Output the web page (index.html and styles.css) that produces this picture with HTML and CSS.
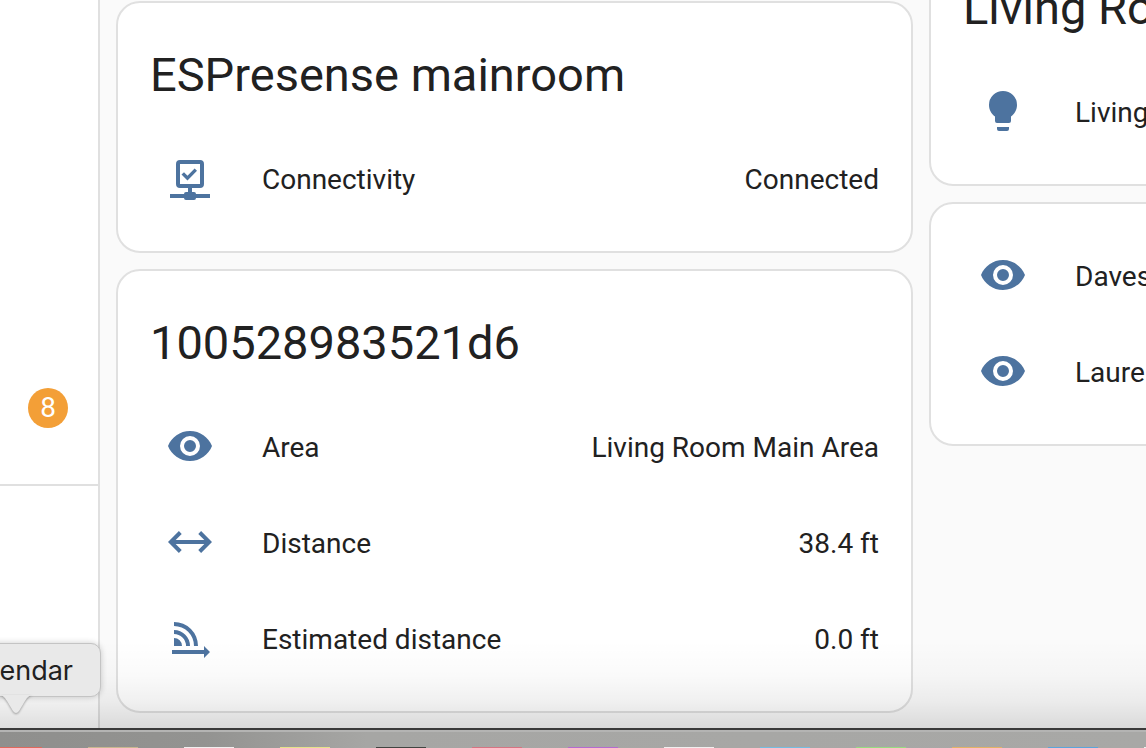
FILE: index.html
```html
<!DOCTYPE html>
<html lang="en">
<head>
    <meta charset="UTF-8">
    <meta name="viewport" content="width=device-width, initial-scale=1.0">
    <title>Overview</title>
    <link rel="stylesheet" href="styles.css">
</head>
<body>
    <!-- Shared icon shapes -->
    <svg class="icon-defs" aria-hidden="true">
        <symbol id="eye" viewBox="0 0 24 24">
            <path d="M12,9A3,3 0 0,0 9,12A3,3 0 0,0 12,15A3,3 0 0,0 15,12A3,3 0 0,0 12,9M12,17A5,5 0 0,1 7,12A5,5 0 0,1 12,7A5,5 0 0,1 17,12A5,5 0 0,1 12,17M12,4.5C7,4.5 2.73,7.61 1,12C2.73,16.39 7,19.5 12,19.5C17,19.5 21.27,16.39 23,12C21.27,7.61 17,4.5 12,4.5Z"/>
        </symbol>
        <symbol id="bulb" viewBox="0 0 24 24">
            <path d="M12,2A7,7 0 0,0 5,9C5,11.38 6.19,13.47 8,14.74V17A1,1 0 0,0 9,18H15A1,1 0 0,0 16,17V14.74C17.81,13.47 19,11.38 19,9A7,7 0 0,0 12,2M9,21A1,1 0 0,0 10,22H14A1,1 0 0,0 15,21V20H9V21Z"/>
        </symbol>
        <symbol id="network" viewBox="0 -1 24 24">
            <path fill-rule="evenodd" d="M7,2H17A2,2 0 0,1 19,4V14A2,2 0 0,1 17,16H7A2,2 0 0,1 5,14V4A2,2 0 0,1 7,2M7,4V14H17V4Z"/>
            <path d="M10.75,12.25L7.75,9.25L9,8.1L10.75,9.85L14.3,6.25L15.5,7.4Z"/>
            <path d="M11,16H13V18H14A1,1 0 0,1 15,19H22V21H15A1,1 0 0,1 14,22H10A1,1 0 0,1 9,21H2V19H9A1,1 0 0,1 10,18H11Z"/>
        </symbol>
        <symbol id="arrows" viewBox="0 0 24 24">
            <path d="M6.45,17.45L1,12L6.45,6.55L7.86,7.96L4.83,11H19.17L16.14,7.96L17.55,6.55L23,12L17.55,17.45L16.14,16.04L19.17,13H4.83L7.86,16.04L6.45,17.45Z"/>
        </symbol>
        <symbol id="signal" viewBox="0 0 24 24">
            <path d="M4,4A12,12 0 0,1 16,16H14A10,10 0 0,0 4,6ZM4,8A8,8 0 0,1 12,16H10A6,6 0 0,0 4,10ZM4,12A4,4 0 0,1 8,16H4ZM3,18H19V16L22,19L19,22V20H3Z"/>
        </symbol>
    </svg>

    <div class="app">
        <aside class="sidebar">
            <div class="sidebar-top">
                <span class="badge">8</span>
            </div>
            <div class="sidebar-bottom"></div>
        </aside>

        <main class="columns">
            <div class="column">
                <section class="card">
                    <h1>ESPresense mainroom</h1>
                    <div class="entities">
                        <div class="row"><svg class="icon"><use href="#network"/></svg><span class="name">Connectivity</span><span class="state">Connected</span></div>
                    </div>
                </section>
                <section class="card">
                    <h1>100528983521d6</h1>
                    <div class="entities">
                        <div class="row"><svg class="icon"><use href="#eye"/></svg><span class="name">Area</span><span class="state">Living Room Main Area</span></div>
                        <div class="row"><svg class="icon"><use href="#arrows"/></svg><span class="name">Distance</span><span class="state">38.4 ft</span></div>
                        <div class="row"><svg class="icon"><use href="#signal"/></svg><span class="name">Estimated distance</span><span class="state">0.0 ft</span></div>
                    </div>
                </section>
            </div>

            <div class="column column-scrolled">
                <section class="card">
                    <h1>Living Room</h1>
                    <div class="entities">
                        <div class="row"><svg class="icon"><use href="#bulb"/></svg><span class="name">Living</span></div>
                    </div>
                </section>
                <section class="card">
                    <div class="entities no-title">
                        <div class="row"><svg class="icon"><use href="#eye"/></svg><span class="name">Daves</span></div>
                        <div class="row"><svg class="icon"><use href="#eye"/></svg><span class="name">Laure</span></div>
                    </div>
                </section>
            </div>
        </main>
        <div class="dock-shadow"></div>
        <div class="tooltip">
            Calendar
            <svg class="tooltip-arrow" viewBox="0 0 34 19"><path d="M0,0C4,0 6,3 8,6L14,16Q17,20 20,16L26,6C28,3 30,0 34,0Z"/></svg>
        </div>
    </div>

    <footer class="dock">
        <span class="dock-app red"></span>
        <span class="dock-app tan"></span>
        <span class="dock-app white"></span>
        <span class="dock-app yellow"></span>
        <span class="dock-app dark"></span>
        <span class="dock-app pink"></span>
        <span class="dock-app purple"></span>
        <span class="dock-app white"></span>
        <span class="dock-app sky"></span>
        <span class="dock-app green"></span>
        <span class="dock-app orange"></span>
        <span class="dock-app blue"></span>
        <span class="dock-app white"></span>
    </footer>
</body>
</html>
```

FILE: styles.css
```css
* {
    box-sizing: border-box;
}

body {
    margin: 0;
    height: 100vh;
    display: flex;
    flex-direction: column;
    overflow: hidden;
    font-family: Roboto, sans-serif;
    font-size: 28px;
    color: #212121;
    background-color: #fafafa;
}

.icon-defs {
    display: none;
}

.app {
    position: relative;
    flex: 1;
    min-height: 0;
    display: flex;
    overflow: hidden;
}

/* Sidebar */
.sidebar {
    flex: 0 0 100px;
    display: flex;
    flex-direction: column;
    background: white;
    border-right: 2px solid #e0e0e0;
}

.sidebar-top {
    flex: 1;
    display: flex;
    flex-direction: column;
    justify-content: flex-end;
    padding: 0 28px 56px;
    border-bottom: 2px solid #e0e0e0;
}

.sidebar-bottom {
    flex: 0 0 242px;
}

.badge {
    width: 40px;
    height: 40px;
    border-radius: 50%;
    line-height: 40px;
    text-align: center;
    color: white;
    background-color: #f39f37;
}

/* Cards */
.columns {
    flex: 1;
    min-width: 0;
    display: flex;
    gap: 16px;
    padding: 0 16px;
}

.column {
    flex: 0 0 78.6%;
    display: flex;
    flex-direction: column;
    gap: 16px;
    margin-top: 1px;
}

.column-scrolled {
    margin-top: -66px;
}

.card {
    background: white;
    border: 2px solid #e0e0e0;
    border-radius: 24px;
}

h1 {
    margin: 0;
    padding: 24px 32px 16px;
    font-size: 47px;
    font-weight: 400;
    line-height: 96px;
    white-space: nowrap;
}

.entities {
    display: flex;
    flex-direction: column;
    gap: 16px;
    padding: 0 32px 32px;
}

.no-title {
    padding-top: 32px;
}

.row {
    display: flex;
    align-items: center;
    height: 80px;
}

.icon {
    width: 48px;
    height: 48px;
    margin: 0 48px 2px 16px;
    fill: #4d739f;
}

.name {
    flex: 1;
    white-space: nowrap;
}

/* Dock */
.dock-shadow {
    position: absolute;
    left: 0;
    right: 0;
    bottom: 0;
    height: 88px;
    background: linear-gradient(transparent, rgba(0, 0, 0, 0.02) 40%, rgba(0, 0, 0, 0.06) 70%, rgba(0, 0, 0, 0.13));
}

.tooltip {
    position: absolute;
    left: -69px;
    bottom: 31px;
    width: 170px;
    height: 54px;
    border: 1px solid #c4c4c4;
    border-radius: 10px;
    background-color: #e9e9e9;
    box-shadow: 0 0 6px rgba(0, 0, 0, 0.2);
    font-family: Inter, sans-serif;
    font-size: 27px;
    line-height: 53px;
    text-align: right;
    padding-right: 27px;
}

.tooltip-arrow {
    position: absolute;
    top: 51px;
    left: 67px;
    width: 34px;
    height: 19px;
    fill: #e9e9e9;
    filter: drop-shadow(0 1px 1px rgba(0, 0, 0, 0.35));
}

.dock {
    display: flex;
    align-items: flex-end;
    gap: 46px;
    height: 20px;
    border-top: 2px solid #3a3a3a;
    background: linear-gradient(to right, #8f8f8d, #939391 18%, #a6a6a4 32%, #a8a8a6);
    box-shadow: inset 0 2px #b4b4b3;
}

.dock-app {
    flex: 0 0 50px;
    height: 1px;
}

.dock-app:first-child {
    flex-basis: 42px;
}

.red { background-color: #e0695c; }
.tan { background-color: #c9b78f; }
.white { background-color: #f1efef; }
.yellow { background-color: #e6e28a; }
.dark { background-color: #424542; }
.pink { background-color: #d67482; }
.purple { background-color: #b46bd0; }
.sky { background-color: #74bce0; }
.green { background-color: #97dc80; }
.orange { background-color: #e4b265; }
.blue { background-color: #5ba5dc; }
```
